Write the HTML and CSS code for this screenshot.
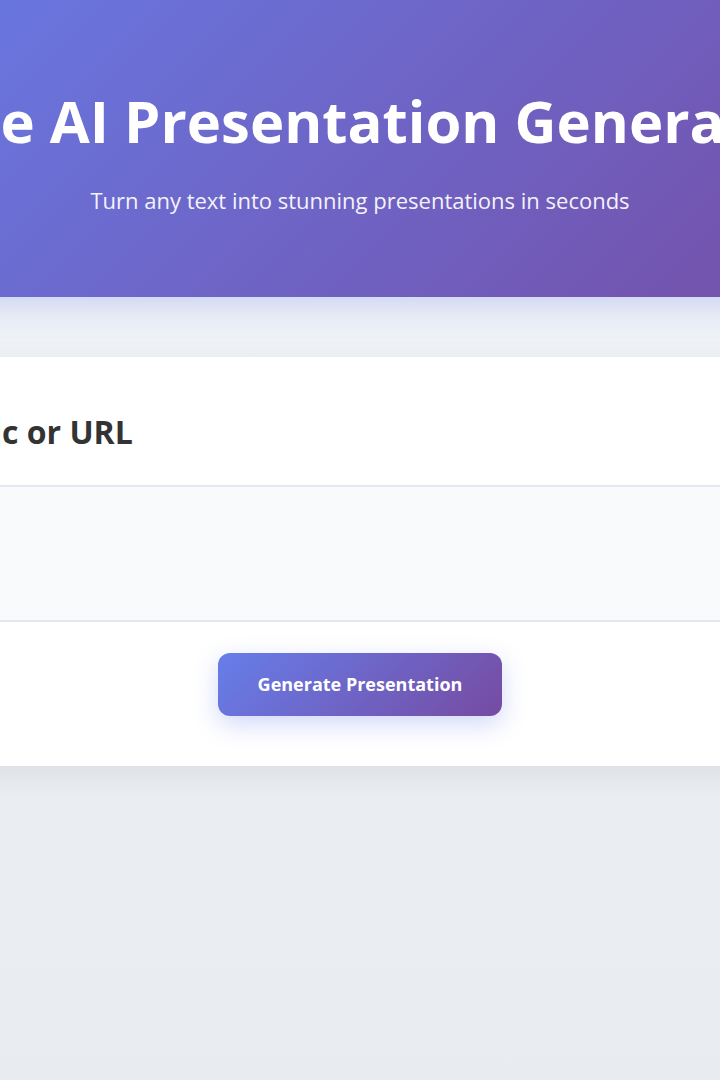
FILE: index.html
```html
<!DOCTYPE html>
<html lang="en">
<head>
  <meta charset="UTF-8" />
  <meta name="viewport" content="width=device-width, initial-scale=1" />
  <title>Free AI Presentation Generator</title>
  <link rel="stylesheet" href="styles.css">
</head>
<body>
  <div class="page">
    <header class="hero">
      <h1>Free AI Presentation Generator</h1>
      <p class="tagline">Turn any text into stunning presentations in seconds</p>
    </header>

    <main class="card">
      <h2>Enter a topic or URL</h2>
      <textarea id="topicInput" rows="5"></textarea>
      <div class="actions">
        <button type="button" id="generateBtn">Generate Presentation</button>
      </div>
    </main>
  </div>
</body>
</html>
```

FILE: styles.css
```css
html, body {
  margin: 0;
  padding: 0;
}
body {
  font-family: "Open Sans", Arial, sans-serif;
  background: linear-gradient(180deg, #f1f4f8 0%, #ebeef3 70%, #e8ecf1 100%);
  min-height: 100vh;
  display: flex;
  flex-direction: column;
  align-items: center;
  overflow: hidden;
  color: #333;
}
.page {
  width: 1200px;
  flex-shrink: 0;
}
.hero {
  background: linear-gradient(135deg, #667eea 0%, #764ba2 100%);
  color: white;
  text-align: center;
  padding: 86px 20px 80px;
  box-shadow: 0 6px 30px rgba(102, 126, 234, 0.3);
  position: relative;
}
.hero h1 {
  font-size: 58px;
  font-weight: 700;
  line-height: 1.2;
  margin: 0 0 28px;
  white-space: nowrap;
}
.tagline {
  font-size: 22px;
  margin: 0;
  opacity: 0.92;
  line-height: 1.5;
}
.card {
  display: block;
  background: white;
  margin-top: 60px;
  padding: 56px 56px 50px;
  box-shadow: 0 10px 30px rgba(0, 0, 0, 0.07);
}
.card h2 {
  font-size: 32px;
  font-weight: 700;
  line-height: 1.2;
  margin: 0 0 34px;
  color: #333;
}
textarea {
  display: block;
  width: 100%;
  height: 137px;
  box-sizing: border-box;
  border: 2px solid #e2e8f0;
  border-radius: 12px;
  background: #f8fafc;
  padding: 16px;
  font-family: inherit;
  font-size: 16px;
  resize: vertical;
}
.actions {
  text-align: center;
  margin-top: 31px;
}
#generateBtn {
  background: linear-gradient(135deg, #667eea 0%, #764ba2 100%);
  color: white;
  border: none;
  border-radius: 12px;
  padding: 19px 40px;
  font-family: inherit;
  font-size: 18px;
  font-weight: 700;
  line-height: 25px;
  cursor: pointer;
  box-shadow: 0 8px 25px rgba(102, 126, 234, 0.3);
}
```
